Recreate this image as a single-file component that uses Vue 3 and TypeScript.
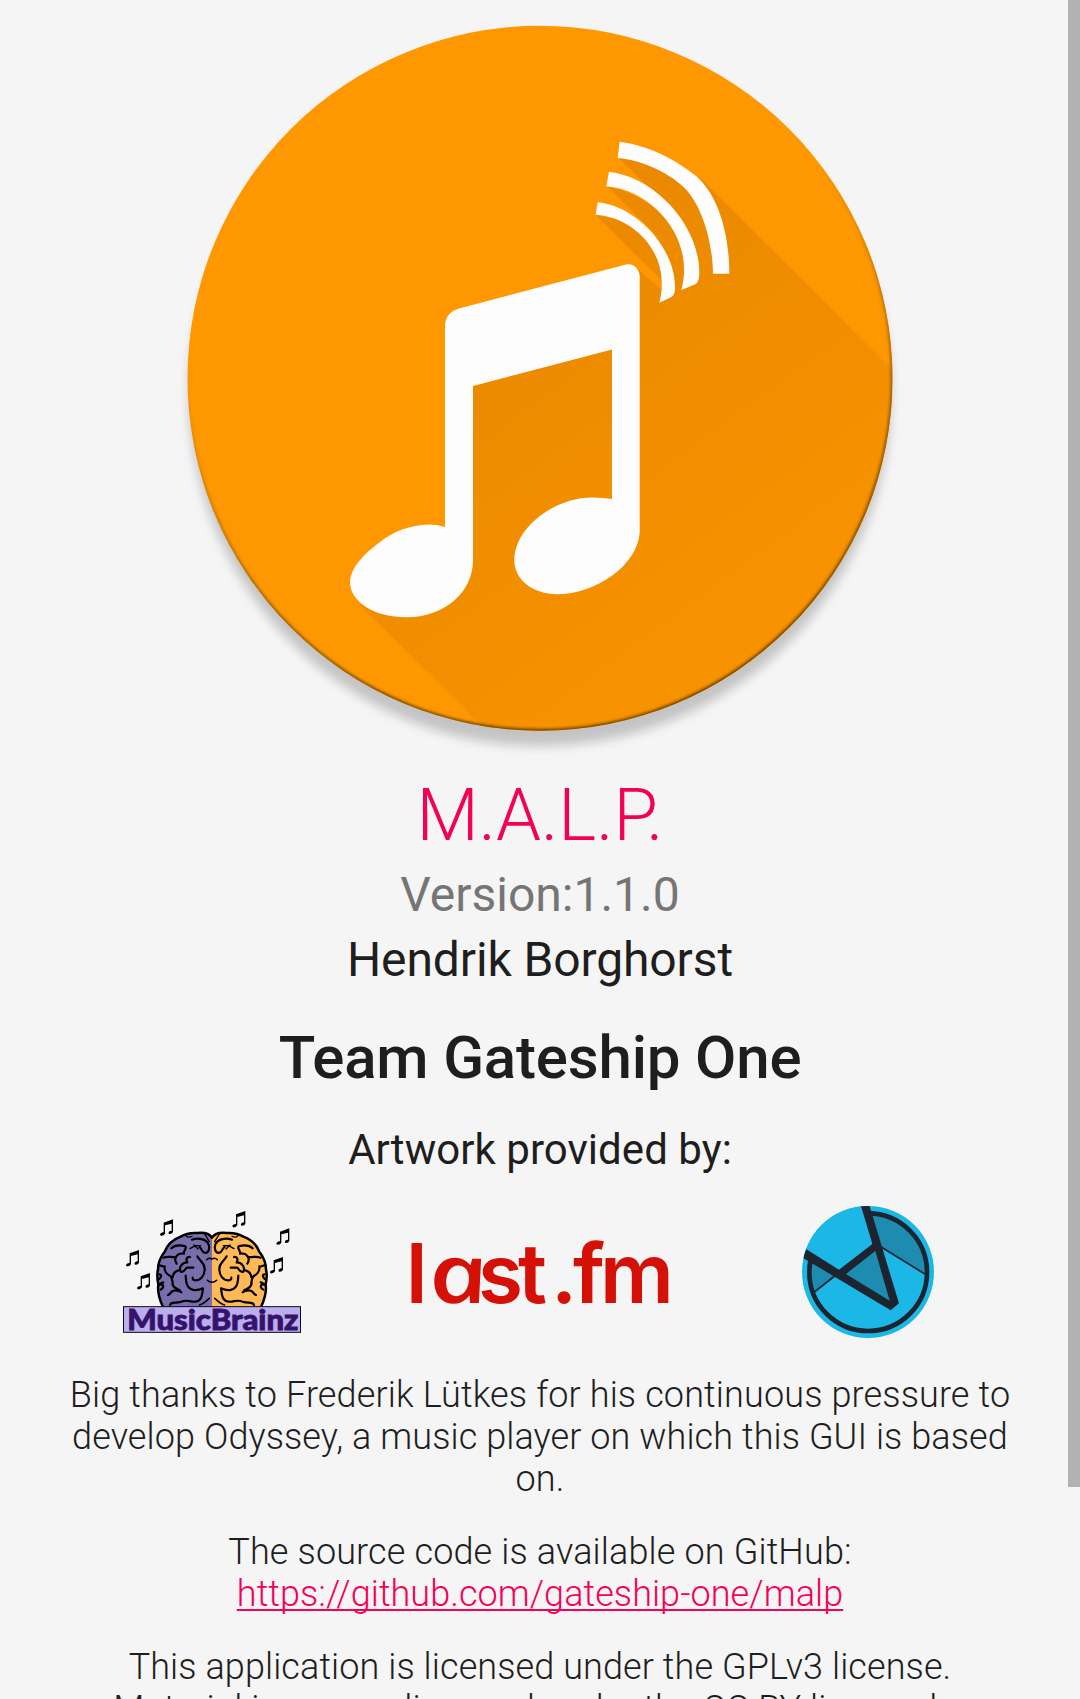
<script setup lang="ts">
interface MiniNote {
  x: number
  y: number
}

const miniNotes: MiniNote[] = [
  { x: 149, y: 73 },
  { x: 366, y: 48 },
  { x: 498, y: 100 },
  { x: 47, y: 165 },
  { x: 479, y: 186 },
  { x: 80, y: 234 },
]

const sourceUrl = 'https://github.com/gateship-one/malp'
</script>

<template>
  <main class="about">
    <svg class="hero" viewBox="0 0 1080 760" role="img" aria-label="M.A.L.P. icon">
      <defs>
        <clipPath id="disc"><circle cx="540" cy="378.3" r="352.5" /></clipPath>
        <linearGradient id="long" gradientUnits="userSpaceOnUse" x1="540" y1="300" x2="760" y2="600">
          <stop offset="0" stop-color="#eb8a00" />
          <stop offset="1" stop-color="#f79200" />
        </linearGradient>
        <linearGradient id="rim" x1="0.15" y1="0.45" x2="0.36" y2="1.05">
          <stop offset="0" stop-color="#5a3500" stop-opacity="0" />
          <stop offset="0.55" stop-color="#5a3500" stop-opacity="0.6" />
          <stop offset="1" stop-color="#4a2c00" stop-opacity="0.85" />
        </linearGradient>
        <filter id="soft" x="-10%" y="-10%" width="120%" height="120%">
          <feGaussianBlur stdDeviation="5.5" />
        </filter>
        <filter id="thin" x="-5%" y="-5%" width="110%" height="110%">
          <feGaussianBlur stdDeviation="1.4" />
        </filter>
      </defs>
      <circle cx="540" cy="395" r="351" fill="#000" opacity="0.2" filter="url(#soft)" />
      <circle cx="540" cy="378.3" r="352.5" fill="#ff9800" />
      <g clip-path="url(#disc)">
        <path
          fill="url(#long)"
          d="M634 266L661 289L675 260L700 178L892 369V760H515L360 605L445 527L473 386L612 349.5L640 277Z
             M618 157Q690 168 712 220V251Z
             M607 186Q660 198 690 250L700 279Z
             M596 215Q654 225 675 255V294Z"
        />
        <circle cx="540" cy="378.3" r="352.7" fill="none" stroke="url(#rim)" stroke-width="4" filter="url(#thin)" />
      </g>
      <g fill="#fdfdfd">
        <path
          d="M445 527V326Q445 313 459 308.5L627 264.3C634 263 639.7 270 639.7 276V533C637 566 595 594.3 557 594.3C533 594 514.3 580 514.3 560C514.5 527 555 497.5 592 497.5Q603 497.5 612 499V349.5L473 386V560C473 592 445 617.3 406 617.3C375 617.3 350 602 350 582C351 566 366 552 384 539C400 528 417 524.5 430 524.5Q438 524.5 445 527Z"
        />
        <g transform="translate(570 120) scale(0.33333)">
          <path d="M149 65C220 75 300 105 378 168C445 226 478 340 478 461H429C428 370 398 255 340 200C290 155 215 120 143 114Z" />
          <path d="M117 155C250 170 388 310 388 460C387 480 384 487 376 493L334 510C340 485 343 465 342 445C342 330 240 210 109 199Z" />
          <path d="M83 247C200 258 315 385 315 500C315 520 312 525 303 532L268 548C275 520 276 505 275 480C270 375 180 290 77 284Z" />
        </g>
      </g>
    </svg>

    <h1 class="name">M.A.L.P.</h1>
    <p class="version">Version:1.1.0</p>
    <p class="author">Hendrik Borghorst</p>
    <h2 class="team">Team Gateship One</h2>
    <p class="artwork">Artwork provided by:</p>

    <div class="providers">
      <svg class="brainz" viewBox="0 0 630 450" role="img" aria-label="MusicBrainz">
        <defs>
          <g id="half">
            <path d="M306 126C296 113 278 112 262 114C246 113 226 116 212 125C190 133 172 150 164 170C148 190 144 206 144 224C140 240 142 254 145 268C142 290 148 312 158 336H306Z" />
            <g fill="none" stroke="#000" stroke-width="6.5" stroke-linecap="round" stroke-linejoin="round">
              <path d="M306 128C296 113 278 112 262 114C246 113 226 116 212 125C190 133 172 150 164 170C148 190 144 206 144 224C140 240 142 254 145 268C142 290 148 312 158 334" stroke-width="7.5" />
              <path d="M246 134C266 126 288 134 295 146C301 158 296 176 284 173C274 170 276 160 268 156" />
              <path d="M226 118C226 127 236 128 246 124M284 117L298 140M240 161L256 152L272 152M252 150L264 162" stroke-width="4" />
              <path d="M184 160C196 148 212 150 226 154C232 162 218 168 222 176C200 172 190 192 200 206" />
              <path d="M240 186C228 184 228 196 232 202C214 202 206 220 212 230C226 234 224 218 232 218H250" />
              <path d="M262 184C270 200 284 202 284 222C284 242 272 256 258 256C250 256 248 254 248 248" />
              <path d="M227 242C228 262 230 280 248 284C260 288 270 284 279 280C276 304 274 318 256 320C240 322 232 312 214 320C196 326 184 318 180 330" />
              <path d="M160 188C176 182 182 188 196 186M146 210L158 214M164 214C162 226 170 238 182 244C188 252 188 258 188 268M188 246C190 234 196 228 206 226" />
              <path d="M148 238C156 238 154 246 148 252M146 270C164 264 162 278 152 284M148 268L160 262" />
              <path d="M174 300C184 298 180 286 196 286C206 286 210 288 214 292M188 268C190 280 200 280 210 286" />
              <path d="M290 194C296 188 302 190 306 192M292 256C298 262 302 262 306 262M268 330C280 328 288 318 298 310" stroke-width="4.5" />
            </g>
          </g>
        </defs>
        <use href="#half" fill="#786eac" />
        <use href="#half" fill="#ffba57" transform="translate(612 0) scale(-1 1)" />
        <g v-for="note in miniNotes" :key="note.x" :transform="`translate(${note.x} ${note.y})`">
          <path d="M12 10L40 0V38Q37 45 29 44Q25 42 27 38Q31 34 36 34V13L16 18V43Q12 50 4 49Q-1 47 2 43Q6 39 12 39Z" />
        </g>
        <rect x="40.5" y="335" width="531" height="77" fill="#baaeeb" stroke="#0c0820" stroke-width="3" />
        <text class="brainz-word" x="52" y="405" textLength="513" lengthAdjust="spacingAndGlyphs">MusicBrainz</text>
      </svg>

      <svg class="lastfm" viewBox="0 0 300 110" role="img" aria-label="last.fm">
        <text class="lastfm-word" x="16" y="83">l</text>
        <text class="lastfm-word round" transform="translate(0 83) skewX(12) scale(1.24 1)" x="35" y="0">a</text>
        <text class="lastfm-word" y="83" x="88 128 161 183 210">st.fm</text>
      </svg>

      <svg class="audiodb" viewBox="0 0 480 450" role="img" aria-label="TheAudioDB">
        <defs><clipPath id="badge"><circle cx="234" cy="231" r="198" /></clipPath></defs>
        <g clip-path="url(#badge)">
          <rect width="480" height="450" fill="#1bb7e7" />
          <path fill="#1e8bb0" d="M245 56A176 176 0 0 1 408 238L268 156ZM62 196A176 176 0 0 0 76 290L148 234ZM168 237L257 165L301 320Z" />
          <circle cx="234.5" cy="231.5" r="176.5" fill="none" stroke="#1c2430" stroke-width="14" />
          <path fill="#1bb7e7" d="M30 20H224L252 152L146 230L30 176Z" />
          <path fill="none" stroke="#1c2430" stroke-width="5" d="M270 154L406 238M73 291L138 240" />
          <path fill="#1c2430" d="M212 30H238L327 325L302 346L38 188L48 162L147 224L247 147ZM168 237L299 317L256 168Z" fill-rule="evenodd" />
        </g>
      </svg>
    </div>

    <p class="body thanks">
      <span class="wide">Big thanks to Frederik Lütkes for his continuous pressure to</span>
      develop Odyssey, a music player on which this GUI is based on.
    </p>
    <p class="body">
      <span class="wide">The source code is available on GitHub:</span><br />
      <a class="link" :href="sourceUrl">{{ sourceUrl }}</a>
    </p>
    <p class="body license">
      This application is licensed under the GPLv3 license.<br />
      Material icons are licensed under the CC BY license by
    </p>
    <div class="scrollbar"></div>
  </main>
</template>

<style>
body {
  margin: 0;
  background: #f5f5f5;
}
</style>

<style scoped>
.about {
  position: relative;
  display: flex;
  flex-direction: column;
  align-items: center;
  width: 1080px;
  height: 1699px;
  overflow: hidden;
  background: #f5f5f5;
  color: #1e1e1e;
  font-family: Roboto, sans-serif;
  text-align: center;
}
.about > * {
  flex-shrink: 0;
}
h1,
h2,
p {
  margin: 0;
}
.hero {
  display: block;
  width: 1080px;
  height: 760px;
}
.name {
  margin-top: 14px;
  font-size: 72px;
  font-weight: 300;
  line-height: 84px;
  color: #f50057;
}
.version {
  margin-top: 9px;
  font-size: 48px;
  line-height: 56px;
  color: #757575;
}
.author {
  margin-top: 9px;
  font-size: 48px;
  line-height: 56px;
  letter-spacing: -0.12px;
}
.team {
  margin-top: 35px;
  font-size: 60px;
  font-weight: 500;
  line-height: 70px;
  letter-spacing: -0.18px;
}
.artwork {
  margin-top: 32px;
  font-size: 42px;
  line-height: 50px;
  letter-spacing: 0.04px;
}
.providers {
  display: flex;
  align-items: flex-start;
  align-self: stretch;
  margin-top: 20px;
  padding-left: 110px;
  height: 150px;
}
.brainz {
  width: 210px;
  height: 150px;
}
.brainz-word {
  font-family: Lato, sans-serif;
  font-size: 83px;
  font-weight: 900;
  fill: #35126d;
  stroke: #35126d;
  stroke-width: 2.5px;
}
.lastfm {
  width: 300px;
  height: 110px;
  margin: 25px 100px 0 70px;
}
.lastfm-word {
  font-family: Inter, sans-serif;
  font-size: 82px;
  font-weight: 600;
  fill: #d51007;
}
.round {
  font-family: 'Open Sans', sans-serif;
  font-style: italic;
}
.audiodb {
  width: 160px;
  height: 150px;
}
.body {
  width: 960px;
  margin-top: 31px;
  font-size: 36px;
  font-weight: 300;
  line-height: 42px;
  letter-spacing: 0.09px;
}
.wide {
  letter-spacing: 0.14px;
}
.thanks {
  margin-top: 29px;
}
.license {
  white-space: nowrap;
}
.link {
  color: #f50057;
  letter-spacing: 0.06px;
  text-decoration: underline;
  text-decoration-thickness: 2px;
  text-underline-offset: 3px;
  text-decoration-skip-ink: none;
}
.scrollbar {
  position: absolute;
  top: 0;
  right: 0;
  width: 12px;
  height: 1487px;
  background: #b2b2b2;
}
</style>
